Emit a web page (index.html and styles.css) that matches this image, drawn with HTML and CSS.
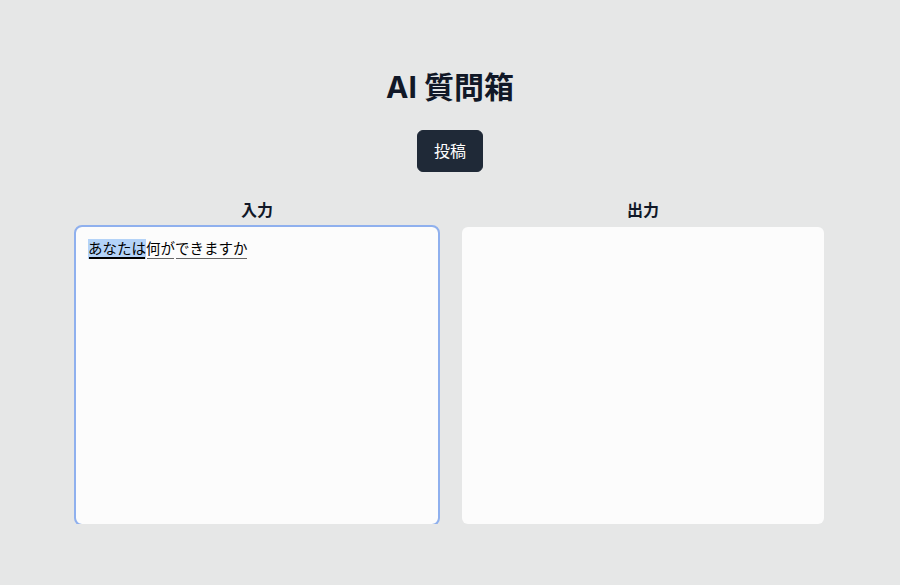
FILE: index.html
```html
<!DOCTYPE html>
<html lang="ja">
<head>
    <meta charset="UTF-8">
    <meta name="viewport" content="width=device-width, initial-scale=1.0">
    <title>AI 質問箱</title>
    <link rel="stylesheet" href="styles.css">
</head>
<body>
    <main class="page">
        <h1 class="title">AI 質問箱</h1>
        <button class="post-button">投稿</button>
        <div class="panels">
            <section class="panel">
                <h2 class="panel-label">入力</h2>
                <!-- 入力中 (IME 変換中) の状態 -->
                <div class="input-box"><span class="seg seg-active">あなたは</span><span class="seg">何が</span><span class="seg">できますか</span></div>
            </section>
            <section class="panel">
                <h2 class="panel-label">出力</h2>
                <div class="output-box"></div>
            </section>
        </div>
    </main>
</body>
</html>
```

FILE: styles.css
```css
body {
    font-family: Inter, "Noto Sans CJK JP", sans-serif;
    background-color: #e6e7e7;
    color: #111827;
    margin: 0;
}
.page {
    display: flex;
    flex-direction: column;
    align-items: center;
    padding-top: 69px;
}
.title {
    font-size: 30px;
    line-height: 36px;
    font-weight: 700;
    margin: 0 0 25px;
}
.post-button {
    font-family: inherit;
    font-size: 16px;
    line-height: 24px;
    color: #fff;
    background-color: #1f2937;
    border: 1px solid #1f2937;
    border-radius: 6px;
    padding: 8px 16px;
    cursor: pointer;
}
.panels {
    display: grid;
    grid-template-columns: 1fr 1fr;
    gap: 24px;
    width: 748px;
    margin-top: 26px;
}
.panel-label {
    text-align: center;
    font-size: 16px;
    line-height: 24px;
    font-weight: 700;
    margin: 0 0 5px;
}
.input-box,
.output-box {
    height: 297px;
    box-sizing: border-box;
    background-color: #fcfcfc;
    border-radius: 6px;
    padding: 12px;
    font-size: 14.5px;
    color: #000;
}
.input-box {
    outline: 2px solid #8fb0ee;
}
.seg {
    display: inline-block;
    height: 20px;
    line-height: 20px;
    background-image: linear-gradient(#666, #666);
    background-size: calc(100% - 2px) 1px;
    background-position: 1px 100%;
    background-repeat: no-repeat;
}
.seg-active {
    background-color: #b4d3f8;
    background-image: linear-gradient(#000, #000);
    background-size: calc(100% - 2px) 2px;
}
```
